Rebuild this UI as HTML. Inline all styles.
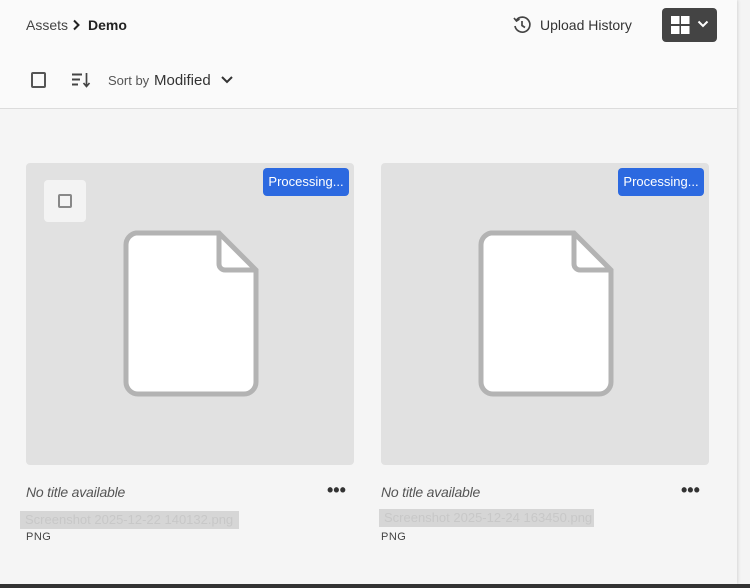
<!DOCTYPE html>
<html><head><style>
*{margin:0;padding:0;box-sizing:border-box}
body{width:750px;height:588px;overflow:hidden;background:#f4f4f4;font-family:"Liberation Sans",sans-serif;position:relative;color:#222}
.main{position:absolute;left:0;top:0;width:737px;height:584px;background:#f5f5f5;box-shadow:1px 0 3px rgba(0,0,0,.12)}
.head{position:absolute;left:0;top:0;width:737px;height:109px;background:#fafafa;border-bottom:1px solid #dcdcdc}
.abs{position:absolute}
.card{position:absolute;top:163px;width:328px;height:302px;background:#e1e1e1;border-radius:4px}
.badge{position:absolute;top:5px;right:5px;width:86px;height:28px;background:#2c69e0;color:#fff;border-radius:4px;font-size:13px;line-height:28px;text-align:center}
.t{position:absolute;font-style:italic;color:#555;font-size:14px;letter-spacing:-0.2px}
.fn{position:absolute;background:#d6d6d6;color:#c8c8c8;font-size:13px;height:18px;line-height:18px;padding-left:5px}
.png{position:absolute;font-size:11px;color:#444;letter-spacing:.5px}
.dots{position:absolute;font-size:18px;font-weight:bold;color:#333}
</style></head><body>
<div class="main">
<div class="head">
 <div class="abs" style="left:26px;top:17px;font-size:14px;color:#444">Assets</div>
 <svg class="abs" style="left:71px;top:19px" width="10" height="12" viewBox="0 0 10 12"><path d="M3 1.5 L7.5 6 L3 10.5" stroke="#222" stroke-width="2" fill="none"/></svg>
 <div class="abs" style="left:88px;top:17px;font-size:14px;font-weight:bold;color:#222">Demo</div>
 <svg class="abs" style="left:512px;top:15px" width="20" height="20" viewBox="0 0 20 20"><path d="M4.5 5 A7.5 7.5 0 1 1 3 11" stroke="#444" stroke-width="1.7" fill="none"/><path d="M2 3 L4.5 6 L7.5 4" stroke="#444" stroke-width="1.7" fill="none"/><path d="M10 6 V10.5 L13 12.5" stroke="#444" stroke-width="1.7" fill="none"/></svg>
 <div class="abs" style="left:540px;top:17px;font-size:14px;color:#333">Upload History</div>
 <div class="abs" style="left:662px;top:8px;width:55px;height:34px;background:#444;border-radius:4px"></div>
 <svg class="abs" style="left:671px;top:16px" width="20" height="19" viewBox="0 0 20 19"><rect x="0" y="0" width="8.5" height="8" fill="#fff"/><rect x="10" y="0" width="8.5" height="8" fill="#fff"/><rect x="0" y="10" width="8.5" height="8" fill="#fff"/><rect x="10" y="10" width="8.5" height="8" fill="#fff"/></svg>
 <svg class="abs" style="left:697px;top:20px" width="12" height="8" viewBox="0 0 12 8"><path d="M1.5 1.5 L6 6 L10.5 1.5" stroke="#fff" stroke-width="2" fill="none"/></svg>
 <div class="abs" style="left:31px;top:72px;width:15px;height:16px;border:2px solid #555;border-radius:2px"></div>
 <svg class="abs" style="left:71px;top:72px" width="20" height="16" viewBox="0 0 20 16"><path d="M1 2.5H11M1 7.5H9M1 12.5H7" stroke="#444" stroke-width="2"/><path d="M15.5 1V14M12.5 11L15.5 14.5L18.5 11" stroke="#444" stroke-width="1.7" fill="none"/></svg>
 <div class="abs" style="left:108px;top:73px;font-size:13px;color:#555">Sort by</div>
 <div class="abs" style="left:154px;top:72px;font-size:15px;color:#333">Modified</div>
 <svg class="abs" style="left:220px;top:75px" width="14" height="9" viewBox="0 0 14 9"><path d="M2 2 L7 7 L12 2" stroke="#333" stroke-width="2" fill="none"/></svg>
</div>

<div class="card" style="left:26px">
 <div class="abs" style="left:18px;top:17px;width:42px;height:42px;background:#f3f3f3;border-radius:4px"></div>
 <div class="abs" style="left:32px;top:31px;width:14px;height:14px;border:2px solid #888;border-radius:2px;background:#f3f3f3"></div>
 <div class="badge">Processing...</div>
 <svg class="abs" style="left:96px;top:67px" width="138" height="168" viewBox="0 0 138 168"><path d="M14 3 H97 L134 40 V152 A12 12 0 0 1 122 164 H16 A12 12 0 0 1 4 152 V15 A12 12 0 0 1 14 3Z" fill="#fff" stroke="#b3b3b3" stroke-width="5"/><path d="M97 3 V34 A6 6 0 0 0 103 40 H134" fill="none" stroke="#b3b3b3" stroke-width="5"/></svg>
</div>
<div class="card" style="left:381px">
 <div class="badge">Processing...</div>
 <svg class="abs" style="left:96px;top:67px" width="138" height="168" viewBox="0 0 138 168"><path d="M14 3 H97 L134 40 V152 A12 12 0 0 1 122 164 H16 A12 12 0 0 1 4 152 V15 A12 12 0 0 1 14 3Z" fill="#fff" stroke="#b3b3b3" stroke-width="5"/><path d="M97 3 V34 A6 6 0 0 0 103 40 H134" fill="none" stroke="#b3b3b3" stroke-width="5"/></svg>
</div>

<div class="t" style="left:26px;top:484px">No title available</div>
<div class="dots" style="left:327px;top:480px">•••</div>
<div class="fn" style="left:20px;top:511px;width:219px">Screenshot 2025-12-22 140132.png</div>
<div class="png" style="left:26px;top:531px">PNG</div>

<div class="t" style="left:381px;top:484px">No title available</div>
<div class="dots" style="left:681px;top:480px">•••</div>
<div class="fn" style="left:379px;top:509px;width:215px">Screenshot 2025-12-24 163450.png</div>
<div class="png" style="left:381px;top:531px">PNG</div>
</div>
<div class="abs" style="left:0;top:584px;width:750px;height:4px;background:#333"></div>
</body></html>
